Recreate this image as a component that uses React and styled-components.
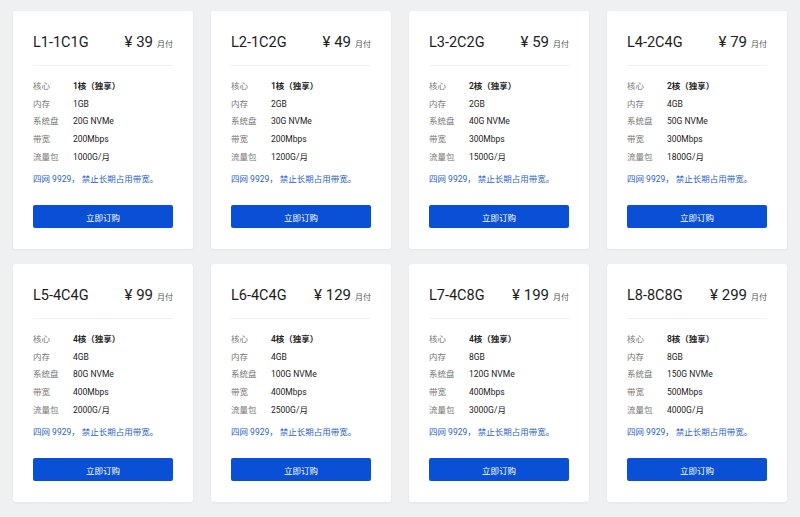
import React from 'react';
import styled, { createGlobalStyle } from 'styled-components';

const Global = createGlobalStyle`
  body { margin: 0; background: #eff0f2; font-family: Roboto, "Noto Sans CJK SC", sans-serif; }
`;

const Grid = styled.div`
  display: grid;
  grid-template-columns: repeat(4, 180px);
  gap: 15px 18px;
  padding: 11px 13px;
`;

const Card = styled.div`
  background: #fff;
  border-radius: 3px;
  box-shadow: 0 1px 3px rgba(0,0,0,0.05);
  padding: 0 20px 21px;
  height: 238px;
  box-sizing: border-box;
  display: flex;
  flex-direction: column;
`;

const Head = styled.div`
  display: flex;
  justify-content: space-between;
  align-items: baseline;
  height: 55px;
  padding-top: 22px;
  box-sizing: border-box;
  border-bottom: 1px solid #f0f1f3;
`;

const Name = styled.div`
  font-size: 14.5px;
  color: #1c1c1c;
`;

const Price = styled.div`
  font-size: 15px;
  color: #222;
  span { font-size: 8px; color: #555; margin-left: 4px; }
`;

const Specs = styled.div`
  display: grid;
  grid-template-columns: 40px 1fr;
  row-gap: 0;
  margin-top: 12px;
  font-size: 8.5px;
  line-height: 17.7px;
`;

const Key = styled.div` color: #777; `;
const Val = styled.div` color: #222; `;

const Note = styled.div`
  color: #2a5fd0;
  font-size: 8.5px;
  margin-top: 5px;
`;

const Button = styled.button`
  margin-top: auto;
  height: 23px;
  border: none;
  border-radius: 2px;
  background: #0a50d6;
  color: #fff;
  font-size: 8.5px;
  font-family: inherit;
`;

const plans = [
  ['L1-1C1G', 39, '1核（独享）', '1GB', '20G NVMe', '200Mbps', '1000G/月'],
  ['L2-1C2G', 49, '1核（独享）', '2GB', '30G NVMe', '200Mbps', '1200G/月'],
  ['L3-2C2G', 59, '2核（独享）', '2GB', '40G NVMe', '300Mbps', '1500G/月'],
  ['L4-2C4G', 79, '2核（独享）', '4GB', '50G NVMe', '300Mbps', '1800G/月'],
  ['L5-4C4G', 99, '4核（独享）', '4GB', '80G NVMe', '400Mbps', '2000G/月'],
  ['L6-4C4G', 129, '4核（独享）', '4GB', '100G NVMe', '400Mbps', '2500G/月'],
  ['L7-4C8G', 199, '4核（独享）', '8GB', '120G NVMe', '400Mbps', '3000G/月'],
  ['L8-8C8G', 299, '8核（独享）', '8GB', '150G NVMe', '500Mbps', '4000G/月'],
];
const keys = ['核心', '内存', '系统盘', '带宽', '流量包'];

export default function App() {
  return (
    <>
      <Global />
      <Grid>
        {plans.map(([name, price, ...vals]) => (
          <Card key={name}>
            <Head>
              <Name>{name}</Name>
              <Price>¥ {price}<span>月付</span></Price>
            </Head>
            <Specs>
              {keys.map((k, i) => (
                <React.Fragment key={k}>
                  <Key>{k}</Key>
                  <Val style={i === 0 ? { fontWeight: 600 } : undefined}>{vals[i]}</Val>
                </React.Fragment>
              ))}
            </Specs>
            <Note>四网 9929， 禁止长期占用带宽。</Note>
            <Button>立即订购</Button>
          </Card>
        ))}
      </Grid>
    </>
  );
}
